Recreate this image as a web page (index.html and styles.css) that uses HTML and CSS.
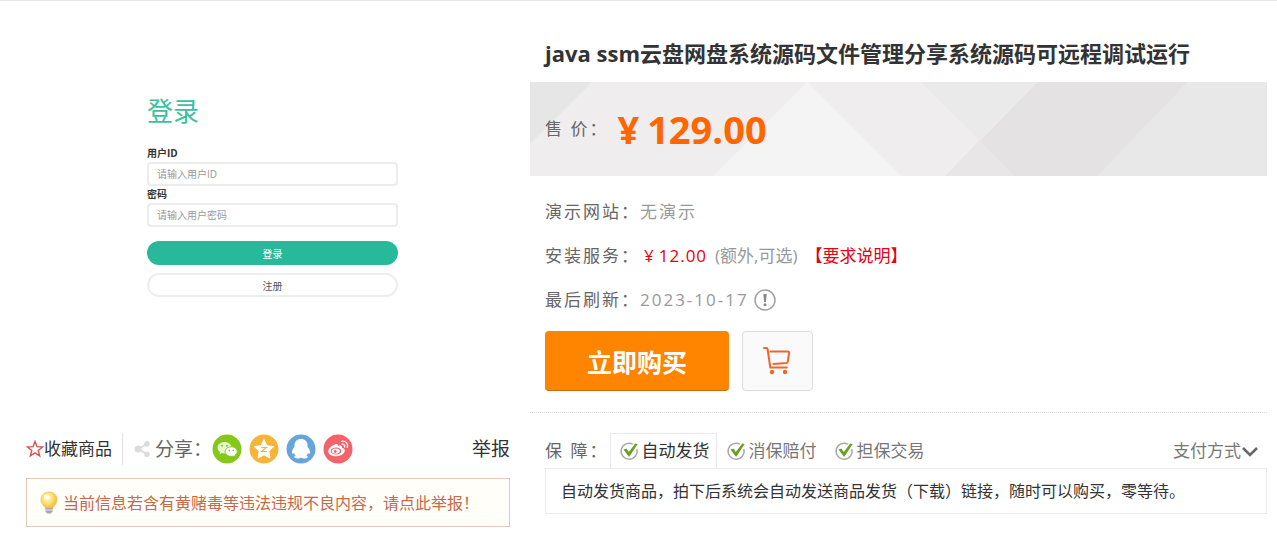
FILE: index.html
```
<!DOCTYPE html>
<html lang="zh-CN">
<head>
    <meta charset="UTF-8">
    <meta name="viewport" content="width=device-width, initial-scale=1.0">
    <title>java ssm云盘网盘系统源码文件管理分享系统源码可远程调试运行</title>
    <link rel="stylesheet" href="styles.css">
</head>
<body>
    <main class="goods">
        <section class="gallery">
            <div class="preview">
                <form class="login-form">
                    <h2 class="login-title">登录</h2>
                    <label for="userId">用户ID</label>
                    <input type="text" id="userId" placeholder="请输入用户ID">
                    <label for="password">密码</label>
                    <input type="password" id="password" placeholder="请输入用户密码">
                    <button type="button" class="login-btn">登录</button>
                    <button type="button" class="register-btn">注册</button>
                </form>
            </div>

            <div class="toolbar">
                <a href="#" class="favorite">
                    <svg width="18" height="18" viewBox="0 0 18 18" aria-hidden="true">
                        <path d="M9 1.500l2 5.200 5.600.3-4.400 3.500 1.500 5.400L9 12.900l-4.700 3 1.500-5.400L1.400 7l5.600-.3z" fill="none" stroke="#d9534a" stroke-width="1.400"/>
                    </svg>
                    收藏商品
                </a>
                <div class="share">
                    <svg width="17" height="18" viewBox="0 0 17 18" aria-hidden="true">
                        <path d="M13 4L4 9l9 5" fill="none" stroke="#dcdcdc" stroke-width="2"/>
                        <circle cx="4" cy="9" r="3.500" fill="#dcdcdc"/>
                        <circle cx="13" cy="3.800" r="2.800" fill="#dcdcdc"/>
                        <circle cx="13" cy="14.200" r="2.800" fill="#dcdcdc"/>
                    </svg>
                    <span class="share-label">分享：</span>
                    <div class="share-list">
                        <a href="#" aria-label="微信">
                            <svg width="30" height="30" viewBox="0 0 30 30">
                                <circle cx="15" cy="15" r="14.500" fill="#85c81b"/>
                                <path d="M12.500 8c-4 0-7 2.500-7 5.700 0 1.800 1 3.400 2.600 4.400l-.6 2.200 2.500-1.300c.8.200 1.600.4 2.500.4 4 0 7-2.600 7-5.700S16.500 8 12.500 8z" fill="#e8f6cf"/>
                                <path d="M19.200 12.800c-3.400 0-6 2.100-6 4.800s2.600 4.800 6 4.800c.7 0 1.400-.1 2-.3l2.200 1.200-.5-1.900c1.400-.9 2.300-2.200 2.300-3.800 0-2.700-2.600-4.800-6-4.800z" fill="#fff" stroke="#85c81b"/>
                                <circle cx="10" cy="11.700" r="1" fill="#85c81b"/>
                                <circle cx="15" cy="11.700" r="1" fill="#85c81b"/>
                                <circle cx="17.300" cy="16.400" r=".8" fill="#85c81b"/>
                                <circle cx="21.300" cy="16.400" r=".8" fill="#85c81b"/>
                            </svg>
                        </a>
                        <a href="#" aria-label="QQ空间">
                            <svg width="30" height="30" viewBox="0 0 30 30">
                                <circle cx="15" cy="15" r="14.500" fill="#f6b53a"/>
                                <path d="M15 5.500l3 6.200 6.700.9-4.900 4.700 1.200 6.700-6-3.200-6 3.200 1.200-6.700-4.900-4.700 6.700-.9z" fill="#fff" stroke="#fff" stroke-linejoin="round"/>
                                <path d="M12 13.500h5.500l-5 4h5.500" fill="none" stroke="#f6b53a" stroke-width="1.100"/>
                            </svg>
                        </a>
                        <a href="#" aria-label="QQ">
                            <svg width="30" height="30" viewBox="0 0 30 30">
                                <circle cx="15" cy="15" r="14.500" fill="#68a5dc"/>
                                <path d="M15 5c-3.900 0-6.500 2.700-6.500 6.400v1.300c-1.600 2-2.600 4.200-2.600 6 0 1.400.9 1.600 2.100.2.300 1 .9 1.900 1.700 2.600-1 .4-1.500.9-1.500 1.600 0 1.600 5.100 1.700 6.800.3 1.700 1.400 6.800 1.300 6.800-.3 0-.7-.5-1.200-1.500-1.600.8-.7 1.400-1.600 1.700-2.600 1.200 1.400 2.100 1.200 2.100-.2 0-1.800-1-4-2.600-6v-1.300C21.500 7.700 18.900 5 15 5z" fill="#fff"/>
                            </svg>
                        </a>
                        <a href="#" aria-label="微博">
                            <svg width="30" height="30" viewBox="0 0 30 30">
                                <circle cx="15" cy="15" r="14.500" fill="#f4626a"/>
                                <path d="M12.300 10.200c1.800-.7 3 .1 2.500 1.900 2.700-1 4.600-.4 4.100 1.600 1.700.5 2.900 1.500 2.900 2.900 0 3-3.700 5.600-8.400 5.600-4.500 0-8.200-2-8.200-5 0-2.600 3.800-6.200 7.100-7z" fill="#fff"/>
                                <ellipse cx="13" cy="17" rx="5.300" ry="3.600" fill="#f4626a"/>
                                <ellipse cx="12.800" cy="17.100" rx="4" ry="2.700" fill="#fff"/>
                                <circle cx="12.300" cy="17.500" r="1.400" fill="#f4626a"/>
                                <path d="M19 10.200c1.800-.2 3 1 2.600 2.800M18.700 7.300c4-.7 6.600 2.400 5.600 6" fill="none" stroke="#fff" stroke-width="1.300" stroke-linecap="round"/>
                            </svg>
                        </a>
                    </div>
                </div>
                <a href="#" class="report">举报</a>
            </div>

            <a href="#" class="notice">
                <svg width="20" height="24" viewBox="0 0 20 24" aria-hidden="true">
                    <defs>
                        <radialGradient id="bulb" cx=".4" cy=".35" r=".7">
                            <stop offset="0" stop-color="#fffbd0"/>
                            <stop offset=".5" stop-color="#fbdf6a"/>
                            <stop offset="1" stop-color="#eeb02c"/>
                        </radialGradient>
                    </defs>
                    <path d="M10 1C5.300 1 2 4.300 2 8.600c0 3 1.600 4.800 3 6.500.8 1 1.300 1.700 1.500 2.900h7c.2-1.200.7-1.900 1.500-2.900 1.400-1.700 3-3.500 3-6.500C18 4.300 14.700 1 10 1z" fill="url(#bulb)" stroke="#e9bd55" stroke-width=".7"/>
                    <path d="M6.500 17h7v3.500l-1.500 2H8l-1.500-2z" fill="#a9a9ac"/>
                    <path d="M6.500 19h7" stroke="#e4e4e6"/>
                    <ellipse cx="8" cy="6" rx="3" ry="2.300" fill="#fff" opacity=".8"/>
                </svg>
                当前信息若含有黄赌毒等违法违规不良内容，请点此举报！
            </a>
        </section>

        <section class="detail">
            <h1 class="goods-title">java ssm云盘网盘系统源码文件管理分享系统源码可远程调试运行</h1>

            <div class="price-bar">
                <svg class="price-bg" viewBox="0 0 736 94" preserveAspectRatio="none" aria-hidden="true">
                    <path d="M0 0h736v94H0z" fill="#efeded"/>
                    <path d="M0 0h62L0 62z" fill="#e7e6e6"/>
                    <path d="M277 0l94 94H183z" fill="#f5f4f4"/>
                    <path d="M390 0h117l-58 58z" fill="#ebeaea"/>
                    <path d="M507 0h150l-90 94H415z" fill="#e4e2e3"/>
                    <path d="M449 58l35 36h-69z" fill="#e8e6e7"/>
                    <path d="M657 0h79v94H567z" fill="#e8e8e8"/>
                </svg>
                <div class="price-row">
                    <span class="label">售 价：</span>
                    <strong class="price"><span>¥</span><span>129.00</span></strong>
                </div>
            </div>

            <div class="info">
                <div class="info-row">
                    <span class="label">演示网站：</span>
                    <span class="value">无演示</span>
                </div>
                <div class="info-row">
                    <span class="label">安装服务：</span>
                    <span class="fee"><span>¥</span><span>12.00</span></span>
                    <span class="optional">(额外,可选)</span>
                    <a href="#" class="require">【要求说明】</a>
                </div>
                <div class="info-row">
                    <span class="label">最后刷新：</span>
                    <span class="value">2023-10-17</span>
                    <svg class="tip" width="24" height="24" viewBox="0 0 24 24" aria-hidden="true">
                        <circle cx="12" cy="12" r="10" fill="#fff" stroke="#a0a0a0" stroke-width="1.500"/>
                        <path d="M10.300 6h3.400l-.8 8h-1.800z" fill="#888"/>
                        <circle cx="12" cy="16.800" r="1.500" fill="#888"/>
                    </svg>
                </div>
            </div>

            <div class="actions">
                <button type="button" class="buy-btn">立即购买</button>
                <button type="button" class="cart-btn" aria-label="加入购物车">
                    <svg width="30" height="30" viewBox="0 0 30 30">
                        <path d="M2 2h2.500c.8 0 1 .4 1.100 1.100L8.300 21.500h16.500" fill="none" stroke="#f2652a" stroke-width="2" stroke-linecap="round" stroke-linejoin="round"/>
                        <path d="M8.500 5.500h17.300c1 0 1.400.5 1.300 1.300l-1.400 9c-.1.700-.5 1-1.200 1.100l-13 1" fill="none" stroke="#f2652a" stroke-width="2" stroke-linecap="round" stroke-linejoin="round"/>
                        <circle cx="10" cy="26" r="2.200" fill="#f2652a"/>
                        <circle cx="23" cy="26" r="2.200" fill="#f2652a"/>
                    </svg>
                </button>
            </div>

            <div class="service">
                <div class="service-head">
                    <span class="label">保 障：</span>
                    <button type="button" class="tab active">
                        <svg width="20" height="20" viewBox="0 0 20 20" aria-hidden="true">
                            <path d="M14 3.200A8 8 0 1 0 17.800 8" fill="none" stroke="#a9aca6" stroke-width="1.500"/>
                            <path d="M4.500 8.600l3-1.200 2.300 3.500 6.500-8.400 2.400.4-8.600 13.100z" fill="#6a9f22"/>
                        </svg>
                        自动发货
                    </button>
                    <button type="button" class="tab">
                        <svg width="20" height="20" viewBox="0 0 20 20" aria-hidden="true">
                            <path d="M14 3.200A8 8 0 1 0 17.800 8" fill="none" stroke="#a9aca6" stroke-width="1.500"/>
                            <path d="M4.500 8.600l3-1.200 2.300 3.500 6.500-8.400 2.400.4-8.600 13.100z" fill="#6a9f22"/>
                        </svg>
                        消保赔付
                    </button>
                    <button type="button" class="tab">
                        <svg width="20" height="20" viewBox="0 0 20 20" aria-hidden="true">
                            <path d="M14 3.200A8 8 0 1 0 17.800 8" fill="none" stroke="#a9aca6" stroke-width="1.500"/>
                            <path d="M4.500 8.600l3-1.200 2.300 3.500 6.500-8.400 2.400.4-8.600 13.100z" fill="#6a9f22"/>
                        </svg>
                        担保交易
                    </button>
                    <button type="button" class="payment">
                        支付方式
                        <svg width="18" height="18" viewBox="0 0 18 18" aria-hidden="true">
                            <path d="M2 6l7 7 7-7" fill="none" stroke="#666" stroke-width="2.500"/>
                        </svg>
                    </button>
                </div>
                <p class="service-text">自动发货商品，拍下后系统会自动发送商品发货（下载）链接，随时可以购买，零等待。</p>
            </div>
        </section>
    </main>
</body>
</html>
```
FILE: styles.css
```
* {
    margin: 0;
    padding: 0;
    box-sizing: border-box;
}

body {
    font-family: 'Open Sans', 'Noto Sans CJK SC', sans-serif;
    font-size: 17px;
    line-height: 24px;
    color: #333;
    background: #fff;
    border-top: 1px solid #e8e8e8;
}

a {
    color: inherit;
    text-decoration: none;
}

button,
input {
    font-family: inherit;
}

button {
    cursor: pointer;
}

svg {
    flex: none;
}

.goods {
    display: flex;
    gap: 20px;
    padding: 0 10px 8px 26px;
}

.gallery {
    flex: 0 0 39%;
}

.preview {
    height: 432px;
    padding: 92px 0 0 25%;
}

.login-form {
    display: flex;
    flex-direction: column;
    width: 70%;
    max-width: 251px;
}

.login-title {
    font-size: 26px;
    font-weight: 400;
    line-height: 36px;
    color: #3cc0a0;
    margin-bottom: 16px;
}

.login-form label {
    font-size: 10px;
    font-weight: 700;
    line-height: 17px;
}

.login-form input {
    height: 24px;
    padding: 0 8px;
    border: 2px solid #ececec;
    border-radius: 4px;
    font-size: 10px;
    color: #666;
}

.login-form input::placeholder {
    color: #999;
}

.login-form button {
    height: 24px;
    border-radius: 12px;
    font-size: 10px;
}

.login-form .login-btn {
    margin: 14px 0 8px;
    border: none;
    background: #28b99a;
    color: #fff;
}

.login-form .register-btn {
    border: 2px solid #eee;
    background: #fff;
    color: #555;
}

.toolbar {
    display: flex;
    align-items: center;
    height: 32px;
    margin-bottom: 13px;
}

.favorite {
    display: flex;
    align-items: center;
    height: 32px;
    padding-right: 10px;
    border-right: 1px solid #e0e0e0;
}

.share {
    display: flex;
    align-items: center;
    padding-left: 11px;
    color: #666;
}

.share-label {
    padding-left: 4px;
    font-size: 19px;
}

.share-list {
    display: flex;
    gap: 7px;
}

.share-list svg {
    display: block;
}

.report {
    margin-left: auto;
    font-size: 19px;
}

.notice {
    display: flex;
    align-items: center;
    gap: 4px;
    height: 49px;
    padding-left: 12px;
    border: 1px solid #e3c9b8;
    background: #fffef8;
    font-size: 16px;
    color: #c56a48;
    white-space: nowrap;
}

.detail {
    flex: 1;
    min-width: 0;
}

.goods-title {
    padding: 36px 15px 12px;
    font-size: 22px;
    font-weight: 700;
    line-height: 33px;
}

.price-bar {
    display: grid;
    height: 94px;
}

.price-bg,
.price-row {
    grid-area: 1 / 1;
    width: 100%;
    height: 94px;
}

.price-row {
    display: flex;
    align-items: center;
    padding-left: 15px;
}

.label {
    letter-spacing: 2px;
    color: #666;
}

.price {
    display: flex;
    gap: 8px;
    padding-left: 9px;
    font-size: 38px;
    line-height: 48px;
    color: #ff6600;
}

.info {
    padding: 14px 15px 9px;
}

.info-row {
    display: flex;
    align-items: center;
    height: 44px;
}

.value {
    letter-spacing: 2px;
    color: #999;
}

.fee {
    display: flex;
    gap: 4px;
    padding: 0 8px 0 4px;
    letter-spacing: 1px;
    color: #e60012;
}

.optional {
    color: #999;
}

.require {
    padding-left: 8px;
    color: #e60012;
}

.tip {
    margin-left: 4px;
}

.actions {
    display: flex;
    gap: 13px;
    padding: 0 15px 21px;
    border-bottom: 1px dotted #ddd;
}

.buy-btn,
.cart-btn {
    height: 60px;
    border-radius: 4px;
}

.buy-btn {
    width: 184px;
    border: none;
    border-bottom: 1px solid #c96a05;
    background: #ff8400;
    font-size: 25px;
    font-weight: 700;
    color: #fff;
}

.cart-btn {
    display: flex;
    align-items: center;
    justify-content: center;
    width: 71px;
    border: 1px solid #ddd;
    background: #fafafa;
}

.service {
    padding: 20px 0 0 15px;
}

.service-head {
    display: flex;
    align-items: center;
    height: 35px;
}

.tab,
.payment {
    display: flex;
    align-items: center;
    border: none;
    background: none;
    font-size: 17px;
    line-height: 24px;
    color: #777;
}

.tab {
    gap: 2px;
    height: 35px;
    padding: 0 8px;
    border: 1px solid transparent;
    border-bottom: none;
}

.tab.active {
    margin-left: 2px;
    padding-right: 7px;
    border-color: #e8e8ee;
    color: #333;
}

.payment {
    margin-left: auto;
    padding-right: 8px;
}

.service-text {
    padding: 10px 15px;
    border: 1px solid #ebebeb;
    font-size: 16px;
}
```
